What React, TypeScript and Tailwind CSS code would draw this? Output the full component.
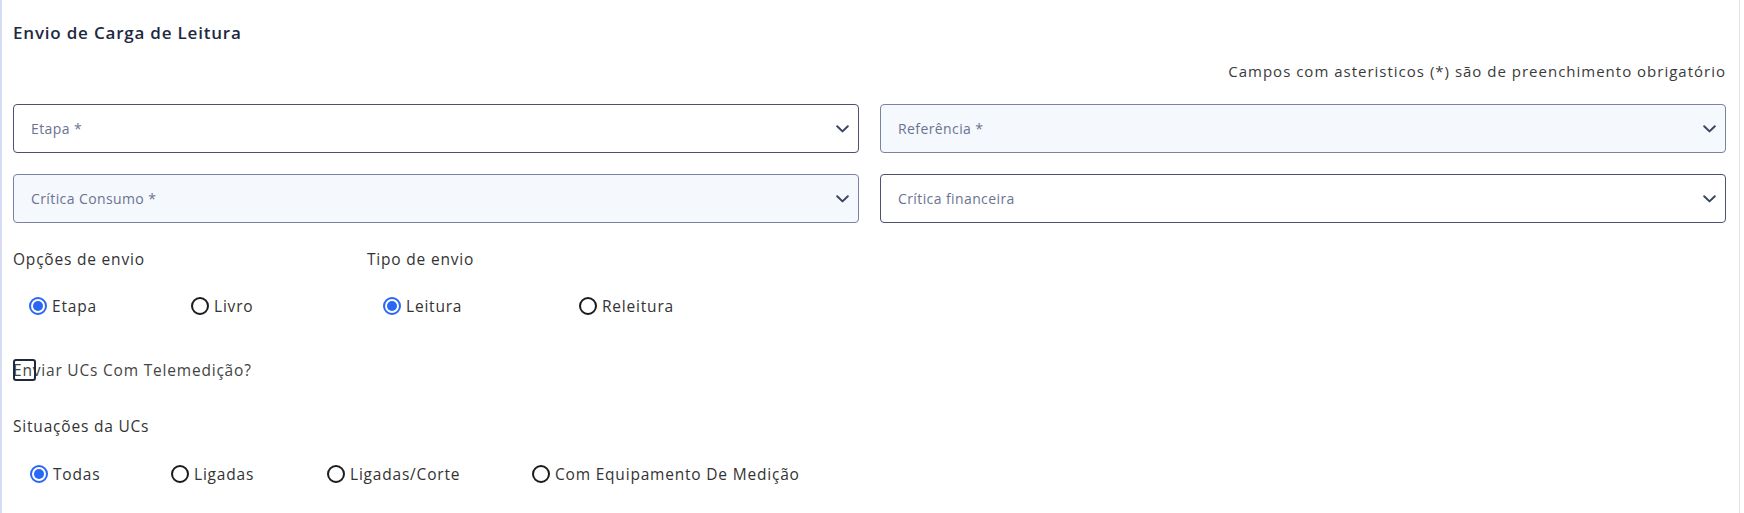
import React from "react";

function Chevron() {
  return (
    <svg width="13" height="8" viewBox="0 0 13 8" fill="none">
      <path d="M1.2 1.2 L6.5 6.4 L11.8 1.2" stroke="#3b4460" strokeWidth="2" strokeLinecap="round" strokeLinejoin="round" />
    </svg>
  );
}

function Select({ label, filled }: { label: string; filled?: boolean }) {
  return (
    <div
      className={
        filled
          ? "h-[49px] rounded-[4px] border border-[#7a82a3] bg-[#f5f8fd] flex items-center justify-between pl-[17px] pr-[9px]"
          : "h-[49px] rounded-[4px] border border-[#4b5270] bg-white flex items-center justify-between pl-[17px] pr-[9px]"
      }
    >
      <span className="text-[14px] tracking-[0.4px] text-[#6b7391]">{label}</span>
      <Chevron />
    </div>
  );
}

function Radio({ label, checked, w }: { label: string; checked?: boolean; w?: string }) {
  return (
    <div className={"flex items-center gap-[5px] " + (w ?? "")}>
      {checked ? (
        <span className="w-[18px] h-[18px] shrink-0 rounded-full border-2 border-[#2a67f4] p-[2px] flex">
          <span className="w-full h-full rounded-full bg-[#2a67f4]" />
        </span>
      ) : (
        <span className="w-[18px] h-[18px] shrink-0 rounded-full border-2 border-[#1c1c1c]" />
      )}
      <span className="text-[15.5px] leading-[24px] tracking-[0.8px] text-[#333]">{label}</span>
    </div>
  );
}

export default function App() {
  return (
    <div className="w-[1744px] h-[513px] bg-white font-['Open_Sans',sans-serif]">
      <div className="w-[1740px] h-full border-l-2 border-l-[#d5dbf3] border-r border-r-[#e3e5ea] pl-[11px] pr-[13px] pt-[21px]">
        <h1 className="text-[17px] leading-[24px] tracking-[0.8px] font-semibold text-[#1e2940]">Envio de Carga de Leitura</h1>
        <p className="mt-[16px] text-right text-[15px] leading-[20px] tracking-[1px] text-[#3a3a3a]">
          Campos com asteristicos (*) são de preenchimento obrigatório
        </p>
        <div className="mt-[23px] grid grid-cols-2 gap-x-[21px] gap-y-[21px]">
          <Select label="Etapa *" />
          <Select label="Referência *" filled />
          <Select label="Crítica Consumo *" filled />
          <Select label="Crítica financeira" />
        </div>

        <div className="mt-[24px] flex">
          <div className="w-[354px]">
            <div className="text-[15.5px] leading-[24px] tracking-[0.8px] text-[#333]">Opções de envio</div>
            <div className="mt-[23px] pl-[16px] flex">
              <Radio label="Etapa" checked w="w-[162px]" />
              <Radio label="Livro" />
            </div>
          </div>
          <div>
            <div className="text-[15.5px] leading-[24px] tracking-[0.8px] text-[#333]">Tipo de envio</div>
            <div className="mt-[23px] pl-[16px] flex">
              <Radio label="Leitura" checked w="w-[196px]" />
              <Radio label="Releitura" />
            </div>
          </div>
        </div>

        <div className="mt-[41px] relative h-[22px] flex items-center">
          <span className="text-[15.5px] leading-[22px] tracking-[0.8px] text-[#444]">Enviar UCs Com Telemedição?</span>
          <span className="absolute left-0 top-0 w-[23px] h-[22px] rounded-[3px] border-2 border-[#1e2940]" />
        </div>

        <div className="mt-[33px] text-[15.5px] leading-[24px] tracking-[0.8px] text-[#333]">Situações da UCs</div>
        <div className="mt-[24px] pl-[17px] flex">
          <Radio label="Todas" checked w="w-[141px]" />
          <Radio label="Ligadas" w="w-[156px]" />
          <Radio label="Ligadas/Corte" w="w-[205px]" />
          <Radio label="Com Equipamento De Medição" />
        </div>
      </div>
    </div>
  );
}
